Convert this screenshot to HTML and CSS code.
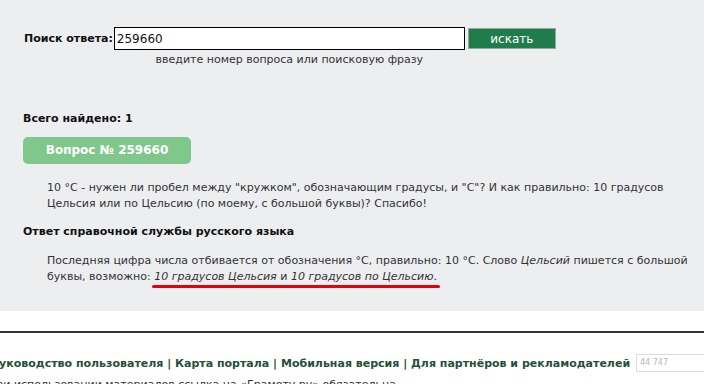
FILE: index.html
```html
<!DOCTYPE html>
<html lang="ru">
<head>
    <meta charset="UTF-8">
    <title>Справочное бюро</title>
    <link rel="stylesheet" href="styles.css">
</head>
<body>
    <div class="main">
        <form class="search">
            <label class="search-label" for="q">Поиск ответа:</label>
            <input class="search-input" type="text" id="q" value="259660">
            <button class="search-button" type="button">искать</button>
            <div class="search-hint">введите номер вопроса или поисковую фразу</div>
        </form>

        <div class="results">
            <div class="found">Всего найдено: 1</div>
            <div class="question-tag">Вопрос № 259660</div>
            <p class="question-text">10 °C - нужен ли пробел между "кружком", обозначающим градусы, и "C"? И как правильно: 10 градусов Цельсия или по Цельсию (по моему, с большой буквы)? Спасибо!</p>
            <div class="answer-title">Ответ справочной службы русского языка</div>
            <p class="answer-text">Последняя цифра числа отбивается от обозначения °C, правильно: 10 °C. Слово <i>Цельсий</i> пишется с большой буквы, возможно: <span class="marked"><i>10 градусов Цельсия</i> и <i>10 градусов по Цельсию</i>.</span></p>
        </div>
    </div>

    <div class="footer">
        <div class="footer-row">
            <div class="footer-links">
                <a href="#">Руководство пользователя</a> | <a href="#">Карта портала</a> | <a href="#">Мобильная версия</a> | <a href="#">Для партнёров и рекламодателей</a>
            </div>
            <div class="counter">44 747</div>
        </div>
        <div class="copyright">При использовании материалов ссылка на «Грамоту.ру» обязательна</div>
    </div>
</body>
</html>
```

FILE: styles.css
```css
body {
    margin: 0;
    background-color: #fff;
    font-family: "DejaVu Sans", Verdana, sans-serif;
    font-size: 11px;
    color: #222;
    overflow: hidden;
}
.main {
    background-color: #eceef0;
    height: 311px;
    padding: 27px 0 0 0;
    box-sizing: border-box;
}
.search {
    display: grid;
    grid-template-columns: auto 351px 88px;
    column-gap: 3px;
    align-items: center;
    margin: 0 0 0 24px;
    width: max-content;
}
.search-label {
    font-weight: bold;
    font-size: 11px;
    color: #111;
    margin-right: -2px;
}
.search-input {
    height: 23px;
    box-sizing: border-box;
    border: 1px solid #000;
    padding: 0 2px;
    font-family: "DejaVu Sans", Verdana, sans-serif;
    font-size: 12px;
    color: #111;
    margin: 0;
}
.search-button {
    height: 21px;
    box-sizing: border-box;
    background-color: #1f7d4c;
    border: 1px solid #9aa39e;
    color: #fff;
    font-family: "DejaVu Sans", Verdana, sans-serif;
    font-size: 12px;
    padding: 0;
    margin: 0;
}
.search-hint {
    grid-column: 2;
    text-align: center;
    color: #333;
    padding-top: 3px;
}
.results {
    padding: 46px 0 0 23px;
}
.found {
    font-weight: bold;
    color: #111;
}
.question-tag {
    display: inline-block;
    margin-top: 12px;
    width: 168px;
    height: 27px;
    line-height: 27px;
    text-align: center;
    background-color: #80c78b;
    border-radius: 5px;
    color: #fff;
    font-weight: bold;
    font-size: 12px;
}
.question-text,
.answer-text {
    margin: 16px 0 0 24px;
    line-height: 16px;
    color: #333;
    width: 650px;
}
.answer-title {
    font-weight: bold;
    color: #111;
    margin-top: 13px;
}
.answer-text {
    margin-top: 15px;
}
.marked {
    position: relative;
}
.marked::after {
    content: "";
    position: absolute;
    left: -2px;
    right: -3px;
    bottom: -5px;
    height: 3px;
    border-radius: 2px;
    background-color: #e3000f;
}
.footer {
    border-top: 2px solid #333;
    margin-top: 20px;
}
.footer-row {
    display: flex;
    align-items: center;
    justify-content: space-between;
    margin: 21px 0 0 -9px;
}
.footer-links {
    font-weight: bold;
    color: #24503a;
}
.footer-links a {
    color: #24503a;
    text-decoration: none;
}
.counter {
    width: 80px;
    height: 18px;
    margin-right: -12px;
    box-sizing: border-box;
    border: 1px solid #dcdcdc;
    color: #b8b8b8;
    font-size: 8px;
    line-height: 16px;
    padding-left: 3px;
}
.copyright {
    margin: 6px 0 0 -12px;
    color: #333;
}
```
